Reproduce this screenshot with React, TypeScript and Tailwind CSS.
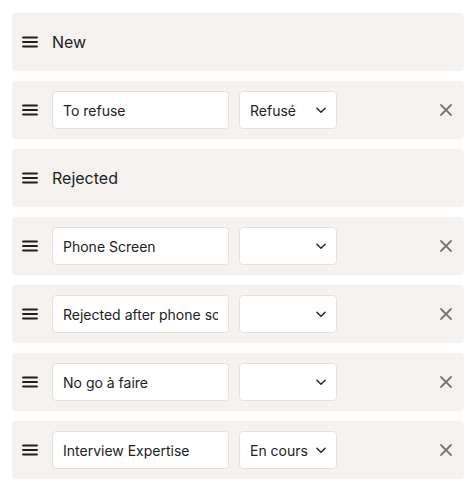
import React from 'react';

type Row =
  | { kind: 'group'; label: string }
  | { kind: 'item'; label: string; status: string };

const ROWS: Row[] = [
  { kind: 'group', label: 'New' },
  { kind: 'item', label: 'To refuse', status: 'Refusé' },
  { kind: 'group', label: 'Rejected' },
  { kind: 'item', label: 'Phone Screen', status: '' },
  { kind: 'item', label: 'Rejected after phone screen', status: '' },
  { kind: 'item', label: 'No go à faire', status: '' },
  { kind: 'item', label: 'Interview Expertise', status: 'En cours' },
];

const Grip = () => (
  <svg width="16" height="14" viewBox="0 0 16 14" className="shrink-0 text-[#1f1f1f]">
    <path d="M1 2.5h14M1 7h14M1 11.5h14" stroke="currentColor" strokeWidth="1.8" strokeLinecap="round" />
  </svg>
);

const Chevron = () => (
  <svg width="14" height="14" viewBox="0 0 24 24" fill="none" stroke="currentColor" strokeWidth="2.4" strokeLinecap="round" strokeLinejoin="round">
    <path d="M5 9l7 7 7-7" />
  </svg>
);

const Cross = () => (
  <svg width="14" height="14" viewBox="0 0 14 14" fill="none" stroke="currentColor" strokeWidth="1.8" strokeLinecap="round">
    <path d="M2 2l10 10M12 2L2 12" />
  </svg>
);

export default function App() {
  return (
    <div className="min-h-screen bg-white px-3 pt-[13px] font-['Inter',sans-serif] text-[#222]">
      <div className="flex flex-col gap-[10px]">
        {ROWS.map((row, i) =>
          row.kind === 'group' ? (
            <div key={i} className="flex h-[58px] items-center gap-[14px] rounded-[4px] bg-[#f5f2ef] pl-[10px] pr-4">
              <Grip />
              <span className="text-[16px]">{row.label}</span>
            </div>
          ) : (
            <div key={i} className="flex h-[58px] items-center rounded-[4px] bg-[#f5f2ef] pl-[10px] pr-[10px]">
              <Grip />
              <input
                readOnly
                value={row.label}
                className="ml-[14px] h-[38px] w-[177px] rounded-[4px] border border-[#e4e1de] bg-white px-[10px] text-[14px] outline-none"
              />
              <div className="ml-[10px] flex h-[38px] w-[98px] items-center justify-between rounded-[4px] border border-[#e4e1de] bg-white pl-[10px] pr-[8px] text-[14px]">
                <span>{row.status}</span>
                <Chevron />
              </div>
              <button className="ml-auto mr-[1px] text-[#777]">
                <Cross />
              </button>
            </div>
          )
        )}
      </div>
    </div>
  );
}
